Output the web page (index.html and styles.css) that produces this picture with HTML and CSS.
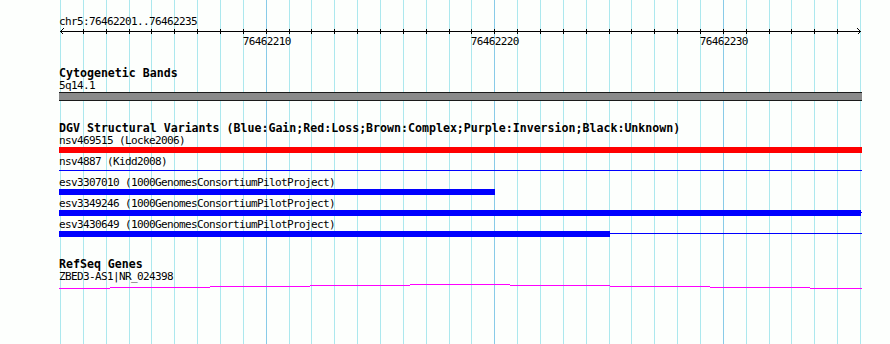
FILE: index.html
```html
<!DOCTYPE html>
<html lang="en">

<head>
    <meta charset="UTF-8">
    <meta name="viewport" content="width=device-width, initial-scale=1.0">
    <title>chr5:76462201..76462235</title>
    <link rel="stylesheet" href="styles.css">
</head>

<body>

    <div class="panel">
        <!-- one line per base, darker every 10 bp -->
        <svg class="grid" width="890" height="344">
            <rect x="60" width="1" height="344" />
            <rect x="83" width="1" height="344" />
            <rect x="106" width="1" height="344" />
            <rect x="129" width="1" height="344" />
            <rect x="151" width="1" height="344" />
            <rect x="174" width="1" height="344" />
            <rect x="197" width="1" height="344" />
            <rect x="220" width="1" height="344" />
            <rect x="243" width="1" height="344" />
            <rect class="major" x="266" width="1" height="344" />
            <rect x="289" width="1" height="344" />
            <rect x="311" width="1" height="344" />
            <rect x="334" width="1" height="344" />
            <rect x="357" width="1" height="344" />
            <rect x="380" width="1" height="344" />
            <rect x="403" width="1" height="344" />
            <rect x="426" width="1" height="344" />
            <rect x="449" width="1" height="344" />
            <rect x="471" width="1" height="344" />
            <rect class="major" x="494" width="1" height="344" />
            <rect x="517" width="1" height="344" />
            <rect x="540" width="1" height="344" />
            <rect x="563" width="1" height="344" />
            <rect x="586" width="1" height="344" />
            <rect x="609" width="1" height="344" />
            <rect x="631" width="1" height="344" />
            <rect x="654" width="1" height="344" />
            <rect x="677" width="1" height="344" />
            <rect x="700" width="1" height="344" />
            <rect class="major" x="723" width="1" height="344" />
            <rect x="746" width="1" height="344" />
            <rect x="769" width="1" height="344" />
            <rect x="791" width="1" height="344" />
            <rect x="814" width="1" height="344" />
            <rect x="837" width="1" height="344" />
            <rect x="860" width="1" height="344" />
        </svg>

        <div class="content">
            <div class="ruler-label">chr5:76462201..76462235</div>
            <svg class="ruler-axis" width="890" height="8">
                <rect x="60" y="4" width="801" height="1" />
                <rect x="83" y="2" width="1" height="5" />
                <rect x="106" y="2" width="1" height="5" />
                <rect x="129" y="2" width="1" height="5" />
                <rect x="151" y="2" width="1" height="5" />
                <rect x="174" y="2" width="1" height="5" />
                <rect x="197" y="2" width="1" height="5" />
                <rect x="220" y="2" width="1" height="5" />
                <rect x="243" y="2" width="1" height="5" />
                <rect x="266" y="2" width="1" height="5" />
                <rect x="289" y="2" width="1" height="5" />
                <rect x="311" y="2" width="1" height="5" />
                <rect x="334" y="2" width="1" height="5" />
                <rect x="357" y="2" width="1" height="5" />
                <rect x="380" y="2" width="1" height="5" />
                <rect x="403" y="2" width="1" height="5" />
                <rect x="426" y="2" width="1" height="5" />
                <rect x="449" y="2" width="1" height="5" />
                <rect x="471" y="2" width="1" height="5" />
                <rect x="494" y="2" width="1" height="5" />
                <rect x="517" y="2" width="1" height="5" />
                <rect x="540" y="2" width="1" height="5" />
                <rect x="563" y="2" width="1" height="5" />
                <rect x="586" y="2" width="1" height="5" />
                <rect x="609" y="2" width="1" height="5" />
                <rect x="631" y="2" width="1" height="5" />
                <rect x="654" y="2" width="1" height="5" />
                <rect x="677" y="2" width="1" height="5" />
                <rect x="700" y="2" width="1" height="5" />
                <rect x="723" y="2" width="1" height="5" />
                <rect x="746" y="2" width="1" height="5" />
                <rect x="769" y="2" width="1" height="5" />
                <rect x="791" y="2" width="1" height="5" />
                <rect x="814" y="2" width="1" height="5" />
                <rect x="837" y="2" width="1" height="5" />
                <polyline class="arrow" points="63.5,1.5 60.5,4.5 63.5,7.5" />
                <polyline class="arrow" points="857.5,1.5 860.5,4.5 857.5,7.5" />
            </svg>
            <div class="ruler-ticks">
                <span class="tick-label" style="left: 266.8px;">76462210</span>
                <span class="tick-label" style="left: 494.8px;">76462220</span>
                <span class="tick-label" style="left: 723.8px;">76462230</span>
            </div>

            <!-- Cytogenetic bands -->
            <section class="track cyto">
                <div class="track-title">Cytogenetic Bands</div>
                <div class="feature-label">5q14.1</div>
                <div class="cyto-bar"></div>
            </section>

            <!-- DGV -->
            <section class="track dgv">
                <div class="track-title">DGV Structural Variants (Blue:Gain;Red:Loss;Brown:Complex;Purple:Inversion;Black:Unknown)</div>

                <div class="feature">
                    <div class="feature-label">nsv469515 (Locke2006)</div>
                    <div class="glyph">
                        <div class="bar loss" style="width: 803px;"></div>
                    </div>
                </div>
                <div class="feature">
                    <div class="feature-label">nsv4887 (Kidd2008)</div>
                    <div class="glyph line"></div>
                </div>
                <div class="feature">
                    <div class="feature-label">esv3307010 (1000GenomesConsortiumPilotProject)</div>
                    <div class="glyph">
                        <div class="bar gain" style="width: 436px;"></div>
                    </div>
                </div>
                <div class="feature">
                    <div class="feature-label">esv3349246 (1000GenomesConsortiumPilotProject)</div>
                    <div class="glyph line">
                        <div class="bar gain" style="width: 802px;"></div>
                    </div>
                </div>
                <div class="feature">
                    <div class="feature-label">esv3430649 (1000GenomesConsortiumPilotProject)</div>
                    <div class="glyph line">
                        <div class="bar gain" style="width: 551px;"></div>
                    </div>
                </div>
            </section>

            <!-- RefSeq -->
            <section class="track refseq">
                <div class="track-title">RefSeq Genes</div>
                <div class="feature-label">ZBED3-AS1|NR_024398</div>
                <svg class="gene" width="803" height="8">
                    <rect x="0" y="5" width="51" height="1" />
                    <rect x="51" y="4" width="100" height="1" />
                    <rect x="151" y="3" width="100" height="1" />
                    <rect x="251" y="2" width="100" height="1" />
                    <rect x="351" y="1" width="100" height="1" />
                    <rect x="451" y="2" width="100" height="1" />
                    <rect x="551" y="3" width="100" height="1" />
                    <rect x="651" y="4" width="100" height="1" />
                    <rect x="751" y="5" width="52" height="1" />
                </svg>
            </section>
        </div>
    </div>

</body>

</html>
```

FILE: styles.css
```css
body {
    margin: 0;
    background-color: #fdfffd;
    font-family: "DejaVu Sans Mono", "Liberation Mono", monospace;
    /* 6px per character, like the small bitmap font */
    font-size: 11px;
    letter-spacing: -0.62px;
    color: #000;
}

.panel {
    position: relative;
    width: 890px;
    height: 344px;
    overflow: hidden;
}

/* background grid */
.grid {
    position: absolute;
    left: 0;
    top: 0;
}

.grid rect {
    fill: #ace8ee;
}

.grid rect.major {
    fill: #88cbe8;
}

.content {
    position: relative;
    padding-top: 15px;
}

/* Ruler */
.ruler-label {
    padding-left: 59px;
    height: 13px;
    line-height: 13px;
    white-space: nowrap;
}

.ruler-axis {
    display: block;
    margin-top: -1px;
    shape-rendering: crispEdges;
}

.ruler-axis rect {
    fill: #000;
}

.ruler-axis .arrow {
    fill: none;
    stroke: #000;
    stroke-width: 1;
}

.ruler-ticks {
    position: relative;
    height: 13px;
    line-height: 13px;
}

.tick-label {
    position: absolute;
    top: 0;
    transform: translateX(-50%);
    white-space: nowrap;
}

/* Tracks */
.track {
    margin-left: 59px;
    width: 803px;
}

.track-title {
    font-weight: bold;
    font-size: 11.6px;
    letter-spacing: 0;
    height: 12px;
    line-height: 12px;
    margin-bottom: 1px;
    white-space: nowrap;
}

.feature-label {
    height: 12px;
    line-height: 12px;
    white-space: nowrap;
}

.cyto {
    margin-top: 19px;
}

.cyto-bar {
    height: 7px;
    background-color: #8a8a8a;
    border-top: 1px solid #1a1a1a;
    border-bottom: 1px solid #1a1a1a;
}

.dgv {
    margin-top: 21px;
}

.feature {
    height: 21px;
}

.glyph {
    height: 6px;
}

.glyph.line {
    background: linear-gradient(#0000ff, #0000ff) no-repeat 0 2px / 100% 1px;
}

.bar {
    height: 6px;
}

.bar.loss {
    background-color: #ff0000;
}

.bar.gain {
    background-color: #0000ff;
}

.refseq {
    margin-top: 18px;
}

.gene {
    display: block;
    shape-rendering: crispEdges;
}

.gene rect {
    fill: #ff00ff;
}
```
